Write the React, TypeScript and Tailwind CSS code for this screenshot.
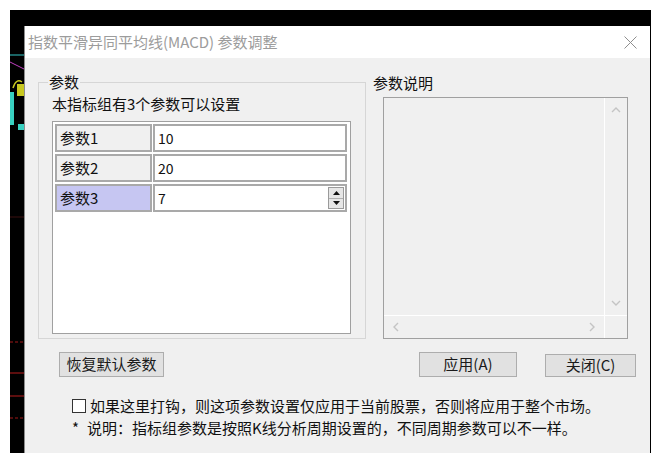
import React from 'react'

const FONT = { fontFamily: '"Noto Sans CJK SC", "Noto Sans", sans-serif' }

function Chevron({ dir }: { dir: 'up' | 'down' | 'left' | 'right' }) {
  const d = {
    up: 'M1 6 L5 2 L9 6',
    down: 'M1 2 L5 6 L9 2',
    left: 'M6 1 L2 5 L6 9',
    right: 'M2 1 L6 5 L2 9',
  }[dir]
  const w = dir === 'up' || dir === 'down' ? 10 : 8
  const h = dir === 'up' || dir === 'down' ? 8 : 10
  return (
    <svg width={w} height={h} viewBox={`0 0 ${w} ${h}`}>
      <path d={d} fill="none" stroke="#c4c4c4" strokeWidth="1.4" />
    </svg>
  )
}

function ParamRow({ label, value, active }: { label: string; value: string; active?: boolean }) {
  return (
    <div className="flex h-[28px] gap-[1px]">
      <div
        className={`w-[97px] border-2 border-[#a9a9a9] pl-[3px] flex items-center text-[15px] text-[#111] ${
          active ? 'bg-[#c6c6f2]' : 'bg-[#f0f0f0]'
        }`}
      >
        {label}
      </div>
      <div className="w-[194px] border-2 border-[#a9a9a9] bg-white pl-[3px] flex items-center text-[14px] text-[#111]">
        <span className="flex-1">{value}</span>
        {active && (
          <div className="w-[16px] h-[22px] mr-[1px] border border-[#9a9a9a] bg-[#e6e6e6] flex flex-col">
            <div className="flex-1 flex items-center justify-center border-b border-[#b0b0b0]">
              <svg width="7" height="4" viewBox="0 0 7 4">
                <path d="M0 4 L3.5 0 L7 4 Z" fill="#111" />
              </svg>
            </div>
            <div className="flex-1 flex items-center justify-center">
              <svg width="7" height="4" viewBox="0 0 7 4">
                <path d="M0 0 L3.5 4 L7 0 Z" fill="#111" />
              </svg>
            </div>
          </div>
        )}
      </div>
    </div>
  )
}

function Button({ children, className }: { children: React.ReactNode; className: string }) {
  return (
    <div
      className={`bg-[#e1e1e1] border border-[#adadad] flex items-center justify-center text-[15px] text-[#1a1a1a] ${className}`}
    >
      {children}
    </div>
  )
}

export default function App() {
  return (
    <div className="w-[668px] h-[467px] bg-white pt-[10px] pl-[10px] overflow-hidden" style={FONT}>
      {/* chart window behind the dialog */}
      <div className="w-[641px] h-[443px] bg-black pt-[16px] flex">
        <svg width="14" height="427" viewBox="0 0 14 427" className="shrink-0">
          <line x1="0" y1="29" x2="14" y2="29" stroke="#35c8c8" strokeWidth="1" />
          <line x1="0" y1="36" x2="14" y2="43" stroke="#c040c0" strokeWidth="1" />
          <path d="M3 62 Q6 52 12 56" fill="none" stroke="#c8c820" strokeWidth="1.5" />
          <rect x="7" y="58" width="7" height="12" fill="#c8c820" />
          <rect x="0" y="66" width="4" height="33" fill="#38d0c0" />
          <rect x="8" y="98" width="6" height="6" fill="#38d0c0" />
          <line x1="0" y1="191" x2="14" y2="191" stroke="#3a1010" strokeWidth="1" />
          <line x1="0" y1="316" x2="14" y2="316" stroke="#a01818" strokeWidth="1" strokeDasharray="3 2" />
          <line x1="0" y1="347" x2="14" y2="347" stroke="#b81c1c" strokeWidth="1" />
          <line x1="0" y1="370" x2="14" y2="370" stroke="#b81c1c" strokeWidth="1" />
          <line x1="0" y1="392" x2="14" y2="392" stroke="#a01818" strokeWidth="1" strokeDasharray="3 2" />
        </svg>

        {/* dialog */}
        <div className="w-[626px] h-[427px] flex flex-col border-l border-[#8c8c8c]">
          <div className="h-[32px] bg-white flex items-center pl-[3px] pr-[13px]">
            <span className="flex-1 text-[15px] text-[#9c9c9c]">指数平滑异同平均线(MACD) 参数调整</span>
            <svg width="13" height="13" viewBox="0 0 13 13">
              <path d="M0.5 0.5 L12.5 12.5 M12.5 0.5 L0.5 12.5" stroke="#8e8e8e" strokeWidth="1" />
            </svg>
          </div>

          <div className="flex-1 bg-[#f0f0f0] pl-[13px] text-[#111]">
            <div className="flex mt-[14px]">
              <fieldset className="w-[328px] h-[267px] border border-[#d6d6d6] pl-[13px] pr-[14px]">
                <legend className="ml-[-4px] px-[1px] text-[15px] leading-[20px]">参数</legend>
                <div className="text-[15px] leading-[20px] mt-[2px]">本指标组有3个参数可以设置</div>
                <div className="mt-[7px] w-[299px] h-[213px] border border-[#a0a0a0] bg-white p-[2px] flex flex-col gap-[2px]">
                  <ParamRow label="参数1" value="10" />
                  <ParamRow label="参数2" value="20" />
                  <ParamRow label="参数3" value="7" active />
                </div>
              </fieldset>

              <div className="ml-[7px] mt-[1px]">
                <div className="text-[15px] leading-[20px]">参数说明</div>
                <div className="ml-[10px] mt-[4px] w-[245px] h-[242px] border border-[#a0a0a0] grid grid-cols-[1fr_22px] grid-rows-[1fr_22px]">
                  <div className="border-r border-b border-white" />
                  <div className="flex flex-col items-center justify-between py-[8px] border-b border-white">
                    <Chevron dir="up" />
                    <Chevron dir="down" />
                  </div>
                  <div className="flex items-center justify-between px-[8px] border-r border-white">
                    <Chevron dir="left" />
                    <Chevron dir="right" />
                  </div>
                  <div />
                </div>
              </div>
            </div>

            <div className="flex items-end mt-[13px]">
              <Button className="ml-[21px] w-[105px] h-[25px]">恢复默认参数</Button>
              <Button className="ml-[255px] w-[98px] h-[25px]">应用(A)</Button>
              <Button className="ml-[28px] w-[91px] h-[23px]">关闭(C)</Button>
            </div>

            <div className="mt-[18px] ml-[34px] h-[22px] flex items-center text-[15px]">
              <div className="w-[14px] h-[14px] border border-[#333] bg-white mr-[4px]" />
              <span>如果这里打钩，则这项参数设置仅应用于当前股票，否则将应用于整个市场。</span>
            </div>
            <div className="ml-[34px] h-[22px] flex items-center text-[15px]">
              <span className="w-[15px]">*</span>
              <span>说明：指标组参数是按照K线分析周期设置的，不同周期参数可以不一样。</span>
            </div>
          </div>
        </div>
      </div>
    </div>
  )
}
